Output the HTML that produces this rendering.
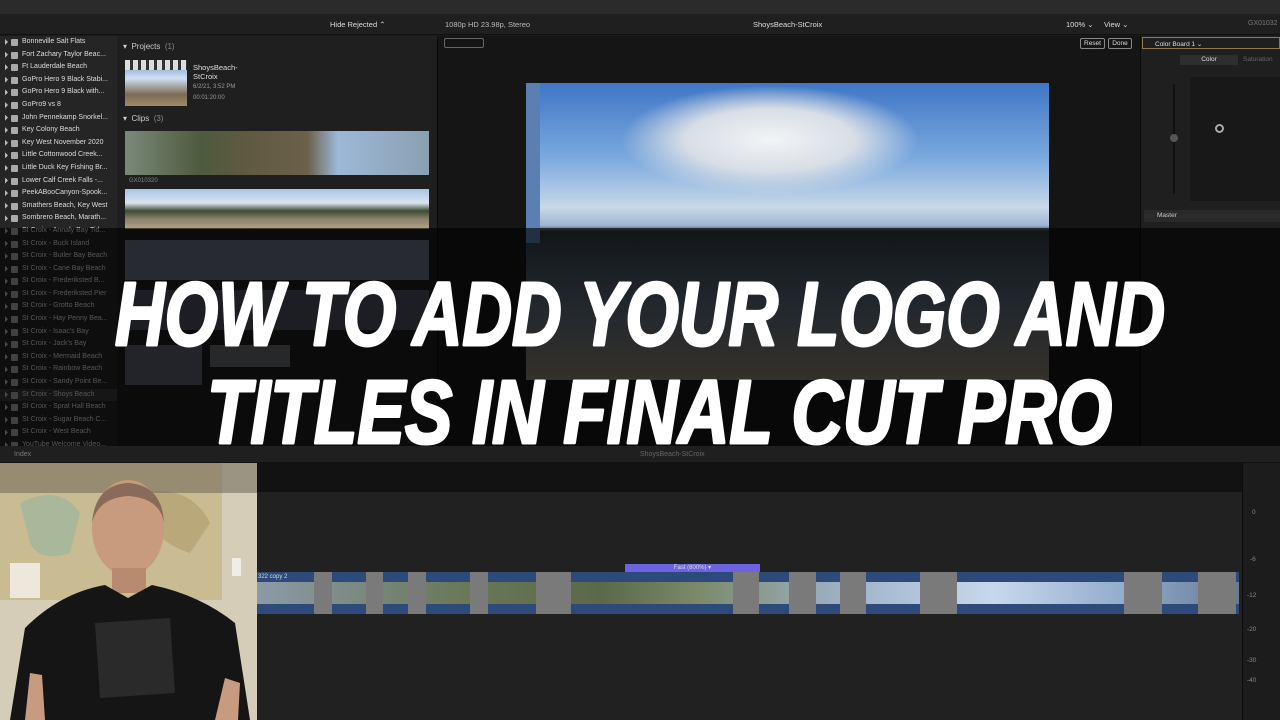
<!DOCTYPE html>
<html><head><meta charset="utf-8"><style>
*{margin:0;padding:0;box-sizing:border-box}
body{width:1280px;height:720px;overflow:hidden;background:#1b1b1b;font-family:"Liberation Sans",sans-serif;position:relative;color:#ccc}
.a{position:absolute}
.side div{height:12.6px;font-size:7px;color:#ddd;padding-left:22px;position:relative;white-space:nowrap;line-height:12.6px}
.side div:before{content:"";position:absolute;left:5px;top:3px;width:3px;height:6px;background:#bbb;clip-path:polygon(0 0,100% 50%,0 100%)}
.side div:after{content:"";position:absolute;left:11px;top:3px;width:7px;height:7px;background:#aaa;border-radius:1px}
.clip{position:absolute;top:572px;height:42px;background:#2d4a7a}
.clip i{position:absolute;left:0;right:0;top:10px;height:22px;display:block}
.gap{position:absolute;top:572px;height:42px;background:#7a7a7a}
.t{font-size:6px;color:#cfd8ee;position:absolute}
</style></head><body>
<div class="a" style="left:0;top:0;width:1280px;height:14px;background:#2b2b2b"></div>
<div class="a" style="left:0;top:14px;width:1280px;height:21px;background:#1f1f1f;border-bottom:1px solid #111"></div>
<div class="a" style="left:330px;top:20px;font-size:7.5px;color:#ddd">Hide Rejected ⌃</div>
<div class="a" style="left:445px;top:20px;font-size:7.5px;color:#bbb">1080p HD 23.98p, Stereo</div>
<div class="a" style="left:753px;top:20px;font-size:7.5px;color:#ddd">ShoysBeach-StCroix</div>
<div class="a" style="left:1066px;top:20px;font-size:7.5px;color:#ddd">100% ⌄ &nbsp;&nbsp;&nbsp; View ⌄</div>
<div class="a" style="left:1248px;top:20px;font-size:7px;color:#777">GX01032</div>
<div class="a side" style="left:0;top:36px;width:117px;height:410px;background:#252525">
<div>Bonneville Salt Flats</div><div>Fort Zachary Taylor Beac...</div><div>Ft Lauderdale Beach</div><div>GoPro Hero 9 Black Stabi...</div><div>GoPro Hero 9 Black with...</div><div>GoPro9 vs 8</div><div>John Pennekamp Snorkel...</div><div>Key Colony Beach</div><div>Key West November 2020</div><div>Little Cottonwood Creek...</div><div>Little Duck Key Fishing Br...</div><div>Lower Calf Creek Falls -...</div><div>PeekABooCanyon-Spook...</div><div>Smathers Beach, Key West</div><div>Sombrero Beach, Marath...</div><div>St Croix - Annaly Bay Tid...</div><div>St Croix - Buck Island</div><div>St Croix - Butler Bay Beach</div><div>St Croix - Cane Bay Beach</div><div>St Croix - Frederiksted B...</div><div>St Croix - Frederiksted Pier</div><div>St Croix - Grotto Beach</div><div>St Croix - Hay Penny Bea...</div><div>St Croix - Isaac's Bay</div><div>St Croix - Jack's Bay</div><div>St Croix - Mermaid Beach</div><div>St Croix - Rainbow Beach</div><div>St Croix - Sandy Point Be...</div><div style="background:#3a3a3a">St Croix - Shoys Beach</div><div>St Croix - Sprat Hall Beach</div><div>St Croix - Sugar Beach C...</div><div>St Croix - West Beach</div><div>YouTube Welcome Video...</div>
</div>
<div class="a" style="left:117px;top:36px;width:320px;height:410px;background:#1f1f1f"></div>
<div class="a" style="left:123px;top:42px;font-size:8px;color:#ccc">▾ &nbsp;Projects &nbsp;<span style="color:#888">(1)</span></div>
<div class="a" style="left:125px;top:60px;width:62px;height:46px;background:linear-gradient(#6a8fc8 0,#cfe0f2 40%,#7b6c55 75%,#a08a6a)"></div>
<div class="a" style="left:125px;top:60px;width:62px;height:10px;background:repeating-linear-gradient(90deg,#ddd 0 5px,#333 5px 8px)"></div>
<div class="a" style="left:193px;top:63px;font-size:7.5px;color:#ddd;line-height:9px">ShoysBeach-<br>StCroix<br><span style="font-size:6px;color:#999">6/2/21, 3:52 PM<br>00:01:20:00</span></div>
<div class="a" style="left:123px;top:114px;font-size:8px;color:#ccc">▾ &nbsp;Clips &nbsp;<span style="color:#888">(3)</span></div>
<div class="a" style="left:125px;top:131px;width:304px;height:44px;background:linear-gradient(90deg,#7a8a7a 0,#4e5a3e 25%,#5f5a40 40%,#6c604a 60%,#9db8d8 70%,#8aa0b0 100%)"></div>
<div class="a" style="left:129px;top:178px;font-size:6px;color:#888">GX010320</div>
<div class="a" style="left:125px;top:189px;width:304px;height:40px;background:linear-gradient(#a9c3e6 0,#d9e5ef 35%,#3d4a32 55%,#8c826c 75%,#b0a284)"></div>
<div class="a" style="left:125px;top:240px;width:304px;height:40px;background:#6a7080"></div>
<div class="a" style="left:125px;top:290px;width:304px;height:40px;background:#4a5060"></div>
<div class="a" style="left:125px;top:345px;width:77px;height:40px;background:#5a6070"></div>
<div class="a" style="left:210px;top:345px;width:80px;height:22px;background:#656a70"></div>
<div class="a" style="left:437px;top:36px;width:703px;height:410px;background:#151515;border-left:1px solid #0a0a0a"></div>
<div class="a" style="left:444px;top:38px;width:40px;height:10px;border:1px solid #666;border-radius:2px"></div>
<div class="a" style="left:1080px;top:38px;width:25px;height:11px;border:1px solid #888;border-radius:2px;font-size:6.5px;color:#ddd;text-align:center;line-height:9px">Reset</div>
<div class="a" style="left:1108px;top:38px;width:24px;height:11px;border:1px solid #888;border-radius:2px;font-size:6.5px;color:#ddd;text-align:center;line-height:9px">Done</div>
<div class="a" style="left:526px;top:83px;width:523px;height:297px;background:linear-gradient(#3f76c6 0,#7aa8de 25%,#c8d8e8 42%,#9fb5cf 48%,#2e3a35 50%,#3a4550 55%,#5a6878 75%,#8a8070 100%)"></div>
<div class="a" style="left:620px;top:85px;width:300px;height:110px;border-radius:50%;background:radial-gradient(ellipse,#f2f4f6 0,#d8dee6 40%,rgba(180,195,215,0) 70%)"></div>
<div class="a" style="left:526px;top:83px;width:14px;height:160px;background:#5b7fb0"></div>
<div class="a" style="left:1140px;top:36px;width:140px;height:410px;background:#1f1f1f;border-left:1px solid #0a0a0a"></div>
<div class="a" style="left:1142px;top:37px;width:138px;height:12px;border:1px solid #8a7a50;font-size:6.5px;color:#ddd;padding:2px 0 0 12px">Color Board 1 ⌄</div>
<div class="a" style="left:1180px;top:55px;width:58px;height:10px;background:#2e2e2e;font-size:6.5px;color:#ddd;text-align:center;line-height:10px">Color</div>
<div class="a" style="left:1243px;top:55px;width:37px;height:10px;font-size:6.5px;color:#666;line-height:10px">Saturation</div>
<div class="a" style="left:1190px;top:77px;width:90px;height:124px;background:#181818"></div>
<div class="a" style="left:1173px;top:84px;width:2px;height:110px;background:#111"></div>
<div class="a" style="left:1170px;top:134px;width:8px;height:8px;border-radius:50%;background:#555"></div>
<div class="a" style="left:1215px;top:124px;width:9px;height:9px;border-radius:50%;border:2px solid #aaa;background:#111"></div>
<div class="a" style="left:1144px;top:210px;width:136px;height:12px;background:#2a2a2a;font-size:6.5px;color:#ccc;padding:2px 0 0 13px">Master</div>
<div class="a" style="left:0;top:228px;width:1280px;height:218px;background:rgba(0,0,0,0.62)"></div>
<div class="a" style="left:0;top:446px;width:1280px;height:17px;background:#1f1f1f;border-bottom:1px solid #111"></div>
<div class="a" style="left:14px;top:451px;font-size:7px;color:#777">Index</div>
<div class="a" style="left:640px;top:451px;font-size:7px;color:#666">ShoysBeach-StCroix</div>
<div class="a" style="left:257px;top:463px;width:1023px;height:29px;background:#121212"></div>
<div class="a" style="left:257px;top:492px;width:985px;height:228px;background:#212121"></div>
<div class="a" style="left:1242px;top:463px;width:38px;height:257px;background:#1c1c1c;border-left:1px solid #0c0c0c"></div>
<div class="a" style="left:1252px;top:510px;font-size:6.5px;color:#888;line-height:1">0</div>
<div class="a" style="left:1250px;top:556px;font-size:6.5px;color:#888">-6</div>
<div class="a" style="left:1247px;top:592px;font-size:6.5px;color:#888">-12</div>
<div class="a" style="left:1247px;top:626px;font-size:6.5px;color:#888">-20</div>
<div class="a" style="left:1247px;top:657px;font-size:6.5px;color:#888">-30</div>
<div class="a" style="left:1247px;top:677px;font-size:6.5px;color:#888">-40</div>
<div class="a" style="left:625px;top:564px;width:135px;height:8px;background:#6b63e0;font-size:6px;color:#ddd;text-align:center;line-height:8px">Fast (800%) ▾</div>
<div class="clip" style="left:257px;width:982px"><i style="background:linear-gradient(90deg,#8c9aa8,#6a7a5a 20%,#5a6a48 35%,#7b8a6a 45%,#9fb2c8 60%,#c8d8ec 75%,#8aa6c8 90%,#6a7a90)"></i></div>
<span class="t a" style="left:258px;top:574px">322 copy 2</span>
<div class="gap" style="left:314px;width:18px"></div><div class="gap" style="left:366px;width:17px"></div>
<div class="gap" style="left:408px;width:18px"></div><div class="gap" style="left:470px;width:18px"></div>
<div class="gap" style="left:536px;width:35px"></div><div class="gap" style="left:733px;width:26px"></div>
<div class="gap" style="left:789px;width:27px"></div><div class="gap" style="left:840px;width:26px"></div>
<div class="gap" style="left:920px;width:37px"></div><div class="gap" style="left:1124px;width:38px"></div>
<div class="gap" style="left:1198px;width:38px"></div>
<svg class="a" style="left:0;top:463px" width="257" height="257" viewBox="0 0 257 257">
<rect width="257" height="257" fill="#d6cdb8"/>
<rect x="0" y="0" width="222" height="137" fill="#c9bb92"/>
<path d="M20 40 Q60 20 80 50 L70 90 Q40 100 30 80Z" fill="#a9b89a"/>
<path d="M140 30 Q190 20 210 60 L190 90 Q160 80 150 60Z" fill="#b8a87a"/>
<rect x="0" y="0" width="257" height="30" fill="#6d6658" opacity="0.55"/>
<rect x="10" y="100" width="30" height="35" fill="#eee8dc"/>
<rect x="232" y="95" width="9" height="18" fill="#f0ede6"/>
<ellipse cx="128" cy="65" rx="36" ry="48" fill="#c89a7e"/>
<path d="M92 60 Q95 22 128 20 Q162 22 164 60 Q160 35 128 33 Q98 35 92 60Z" fill="#8a6a58"/>
<rect x="112" y="105" width="34" height="25" fill="#b88a70"/>
<path d="M10 257 L25 165 Q60 130 105 122 L128 135 L152 122 Q200 132 235 160 L250 257Z" fill="#151515"/>
<path d="M95 160 L170 155 L175 230 L100 235Z" fill="#2a2a2a"/>
<path d="M25 257 L30 210 L42 212 L45 257Z" fill="#c89a80"/>
<path d="M215 257 L225 215 L240 220 L238 257Z" fill="#c89a80"/>
</svg>
<svg class="a" style="left:0;top:0" width="1280" height="720">
<g font-family="Liberation Sans, sans-serif" font-weight="bold" font-style="italic" fill="#fff" stroke="#fff" stroke-width="3" stroke-linejoin="round">
<text x="115" y="345" font-size="90" textLength="1050" lengthAdjust="spacingAndGlyphs">HOW TO ADD YOUR LOGO AND</text>
<text x="207" y="443" font-size="90" textLength="905" lengthAdjust="spacingAndGlyphs">TITLES IN FINAL CUT PRO</text>
</g>
</svg>
</body></html>
